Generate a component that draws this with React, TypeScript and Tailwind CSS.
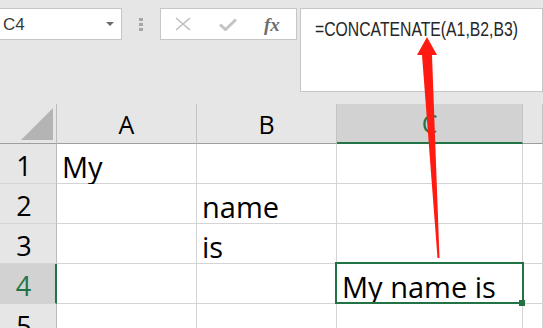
import React from 'react'

const cols = ['A', 'B', 'C', 'D']

const data: Record<string, string> = {
  A1: 'My',
  B2: 'name',
  B3: 'is',
  C4: 'My name is',
}

function NameBox() {
  return (
    <div className="flex h-[32px] w-[122px] items-center justify-between border border-l-0 border-[#c6c6c6] bg-white pl-[3px] pr-[7px]">
      <span className="text-[17px] leading-none text-[#3a3a3a]" style={{ fontFamily: '"Liberation Sans", Arial, sans-serif' }}>
        C4
      </span>
      <svg width="8" height="5" viewBox="0 0 8 5">
        <path d="M0 0 L8 0 L4 4 Z" fill="#6b6b6b" />
      </svg>
    </div>
  )
}

function Dots() {
  return (
    <div className="ml-[17px] mt-[10px] flex flex-col gap-[2px]">
      <div className="h-[3px] w-[4px] bg-[#a6a6a6]" />
      <div className="h-[3px] w-[4px] bg-[#a6a6a6]" />
      <div className="h-[3px] w-[4px] bg-[#a6a6a6]" />
    </div>
  )
}

function FormulaButtons() {
  return (
    <div className="ml-[17px] flex h-[32px] w-[137px] items-center border border-[#c6c6c6] bg-white">
      <svg className="ml-[14px]" width="16" height="14" viewBox="0 0 16 14">
        <path d="M1 1 L15 13 M15 1 L1 13" stroke="#bdbdbd" strokeWidth="1.6" fill="none" />
      </svg>
      <svg className="ml-[28px]" width="18" height="13" viewBox="0 0 18 13">
        <path d="M1 6.5 L6.5 11.5 L17 1.5" stroke="#c4c4c4" strokeWidth="3" fill="none" />
      </svg>
      <span
        className="ml-[27px] text-[19px] font-bold italic leading-none text-[#6e6e6e]"
        style={{ fontFamily: '"Liberation Serif", "Times New Roman", serif' }}
      >
        fx
      </span>
    </div>
  )
}

function FormulaBar() {
  return (
    <div className="ml-[3px] h-[84px] w-[243px] border border-[#c6c6c6] bg-white pl-[14px] pt-[9px]">
      <span
        className="inline-block origin-left scale-x-[0.75] whitespace-nowrap text-[21px] leading-none text-[#262626]"
        style={{ fontFamily: '"Liberation Sans", Arial, sans-serif' }}
      >
        =CONCATENATE(A1,B2,B3)
      </span>
    </div>
  )
}

function ColumnHeader({ col }: { col: string }) {
  const active = col === 'C'
  return (
    <div
      className={
        active
          ? 'flex h-[40px] items-end justify-center border-b-2 border-r border-[#217346] border-r-[#c4c4c4] bg-[#d2d2d2] pb-[6px] text-[25px] leading-none text-[#217346]'
          : 'flex h-[40px] items-end justify-center border-b border-r border-b-[#9e9e9e] border-r-[#c4c4c4] bg-[#e6e6e6] pb-[6px] text-[25px] leading-none text-black'
      }
    >
      {col === 'D' ? '' : col}
    </div>
  )
}

function RowHeader({ row }: { row: number }) {
  const active = row === 4
  return (
    <div
      className={
        active
          ? 'flex h-[40px] items-end justify-center border-b border-r-2 border-b-[#d4d4d4] border-r-[#217346] bg-[#d2d2d2] pb-[4px] pr-[8px] text-[27px] leading-none text-[#217346]'
          : 'flex h-[40px] items-end justify-center border-b border-r border-b-[#d4d4d4] border-r-[#bcbcbc] bg-[#e6e6e6] pb-[4px] pr-[8px] text-[27px] leading-none text-black'
      }
    >
      {row}
    </div>
  )
}

export default function App() {
  return (
    <div
      className="relative h-[328px] w-[543px] overflow-hidden bg-[#e6e6e6]"
      style={{ fontFamily: '"Open Sans", "Noto Sans", sans-serif' }}
    >
      <div className="flex h-[104px] items-start pt-[8px]">
        <NameBox />
        <Dots />
        <FormulaButtons />
        <FormulaBar />
      </div>

      <div className="grid grid-cols-[57px_140px_140px_186px_1fr]">
        <div className="flex h-[40px] items-end justify-end border-b border-r border-b-[#9e9e9e] border-r-[#bcbcbc] bg-[#e6e6e6] pb-[3px] pr-[3px]">
          <svg width="32" height="32" viewBox="0 0 32 32">
            <path d="M32 0 L32 32 L0 32 Z" fill="#b4b4b4" />
          </svg>
        </div>
        {cols.map((c) => (
          <ColumnHeader key={c} col={c} />
        ))}

        {[1, 2, 3, 4, 5].map((r) => (
          <React.Fragment key={r}>
            <RowHeader row={r} />
            {cols.map((c) => (
              <div
                key={c + r}
                className="flex h-[40px] items-end overflow-visible whitespace-nowrap border-b border-r border-[#d4d4d4] bg-white pb-[2px] pl-[5px] text-[29px] leading-none text-black"
              >
                {data[c + r] ?? ''}
              </div>
            ))}
          </React.Fragment>
        ))}
      </div>

      {/* selected cell C4 */}
      <div className="absolute left-[335px] top-[262px] h-[42px] w-[189px] border-2 border-[#217346]" />
      <div className="absolute left-[519px] top-[300px] h-[6px] w-[6px] bg-[#217346]" />

      {/* red arrow */}
      <svg className="pointer-events-none absolute left-0 top-0" width="543" height="328" viewBox="0 0 543 328">
        <path
          d="M427 37 L437 55 L432 55 L439.5 258 L437.5 258 L422 55 L417 55 Z"
          fill="#ff1a12"
        />
      </svg>
    </div>
  )
}
